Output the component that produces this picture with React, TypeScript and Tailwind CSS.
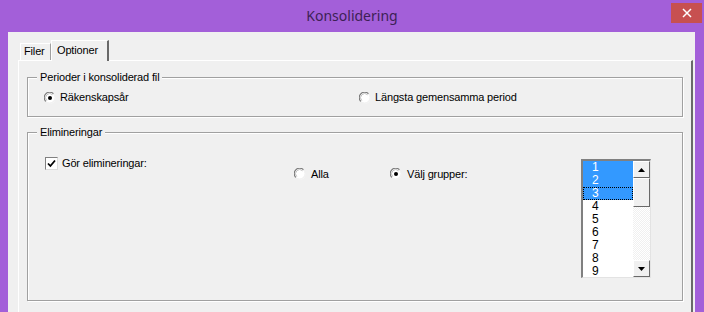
import React from 'react';

const Radio = ({ checked = false }: { checked?: boolean }) => (
  <svg width="12" height="12" viewBox="0 0 12 12" className="shrink-0">
    <circle cx="6" cy="6" r="5.5" fill="#fff" />
    <path d="M1.8 9.5 A5.2 5.2 0 0 1 9.5 1.8" fill="none" stroke="#7a7a7a" strokeWidth="1.2" />
    <path d="M2.8 8.6 A4 4 0 0 1 8.6 2.8" fill="none" stroke="#c0c0c0" strokeWidth="1" />
    <path d="M9.5 1.8 A5.2 5.2 0 0 1 1.8 9.5" fill="none" stroke="#ececec" strokeWidth="1" />
    {checked && <circle cx="6" cy="6" r="2" fill="#000" />}
  </svg>
);

const Checkbox = () => (
  <div className="w-[13px] h-[13px] shrink-0 bg-white border border-t-[#808080] border-l-[#808080] border-r-[#dcdcdc] border-b-[#dcdcdc] flex items-center justify-center">
    <svg width="9" height="9" viewBox="0 0 9 9">
      <path d="M1 4.5 L3.4 7 L8 1.5" fill="none" stroke="#000" strokeWidth="1.8" />
    </svg>
  </div>
);

const Group = ({ label, className, children }: { label: string; className: string; children: React.ReactNode }) => (
  <div className={`relative ml-[8px] w-[656px] border border-[#a0a0a0] shadow-[inset_1px_1px_0_#fff,1px_1px_0_#fff] ${className}`}>
    <span className="absolute left-[9px] -top-[7px] px-[3px] bg-[#f0f0f0] leading-[13px]">{label}</span>
    {children}
  </div>
);

const items = ['1', '2', '3', '4', '5', '6', '7', '8', '9'];

const ScrollButton = ({ up }: { up?: boolean }) => (
  <div className="w-[17px] h-[17px] bg-[#f0f0f0] border border-t-white border-l-white border-r-[#696969] border-b-[#696969] flex items-center justify-center">
    <svg width="7" height="4" viewBox="0 0 7 4">
      <path d={up ? 'M0 4 L3.5 0 L7 4 Z' : 'M0 0 L3.5 4 L7 0 Z'} fill="#000" />
    </svg>
  </div>
);

const ListBox = () => (
  <div className="mt-[26px] w-[70px] h-[119px] bg-white border-l-2 border-t-2 border-[#808080] border-r border-b border-r-[#e3e3e3] border-b-[#e3e3e3] flex">
    <div className="w-[50px] flex flex-col">
      {items.map((n, i) => (
        <div
          key={n}
          className={`h-[13px] leading-[13px] pl-[9px] text-[12px] ${
            i < 3 ? 'bg-[#3399ff] text-white' : 'text-black'
          } ${i === 2 ? 'outline outline-1 outline-dotted outline-black -outline-offset-1' : ''}`}
        >
          {n}
        </div>
      ))}
    </div>
    <div className="w-[17px] flex flex-col bg-[repeating-conic-gradient(#f0f0f0_0_25%,#fff_0_50%)] bg-[length:2px_2px]">
      <ScrollButton up />
      <div className="h-[29px] bg-[#f0f0f0] border border-t-white border-l-white border-r-[#696969] border-b-[#696969]" />
      <div className="flex-1" />
      <ScrollButton />
    </div>
  </div>
);

export default function App() {
  return (
    <div className="w-[704px] h-[312px] overflow-hidden flex flex-col bg-[#a35fd9] font-['Liberation_Sans',Arial,sans-serif] text-[11px] tracking-[-0.15px] text-black">
      <div className="relative h-[32px] shrink-0 flex items-center justify-center">
        <span className="font-['Noto_Sans',sans-serif] text-[14px] tracking-normal text-[#3d1f55] -mt-[1px]">Konsolidering</span>
        <div className="absolute right-[2px] top-[3px] w-[31px] h-[20px] bg-[#c75050] flex items-center justify-center">
          <svg width="10" height="10" viewBox="0 0 10 10">
            <path d="M1 1 L9 9 M9 1 L1 9" stroke="#fff" strokeWidth="1.5" />
          </svg>
        </div>
      </div>
      <div className="flex-1 ml-[8px] mr-[9px] bg-[#f0f0f0] pl-[10px] pr-[2px] pt-[8px] flex flex-col">
        <div className="h-[20px] flex items-end pl-[2px] relative z-10">
          <div className="w-[31px] h-[17px] border-l border-t border-white border-r border-r-[#a0a0a0] pl-[3px] leading-[15px]">Filer</div>
          <div className="w-[58px] h-[21px] -mb-[1px] bg-[#f0f0f0] border-l border-t border-white border-r-2 border-r-[#696969] pl-[5px] leading-[18px]">Optioner</div>
        </div>
        <div className="flex-1 border-l border-t border-white border-r-2 border-r-[#696969]">
          <Group label="Perioder i konsoliderad fil" className="mt-[16px] h-[40px]">
            <div className="pt-[13px] flex items-center h-[26px]">
              <div className="ml-[16px] w-[315px] flex items-center gap-[4px]">
                <Radio checked />
                <span>Räkenskapsår</span>
              </div>
              <div className="flex items-center gap-[4px]">
                <Radio />
                <span>Längsta gemensamma period</span>
              </div>
            </div>
          </Group>
          <Group label="Elimineringar" className="mt-[15px] h-[169px]">
            <div className="flex items-start">
              <div className="ml-[17px] mt-[22px] w-[249px] flex items-center gap-[4px]">
                <Checkbox />
                <span>Gör elimineringar:</span>
              </div>
              <div className="mt-[33px] w-[96px] flex items-center gap-[5px]">
                <Radio />
                <span>Alla</span>
              </div>
              <div className="mt-[33px] w-[191px] flex items-center gap-[5px]">
                <Radio checked />
                <span>Välj grupper:</span>
              </div>
              <ListBox />
            </div>
          </Group>
        </div>
      </div>
    </div>
  );
}
